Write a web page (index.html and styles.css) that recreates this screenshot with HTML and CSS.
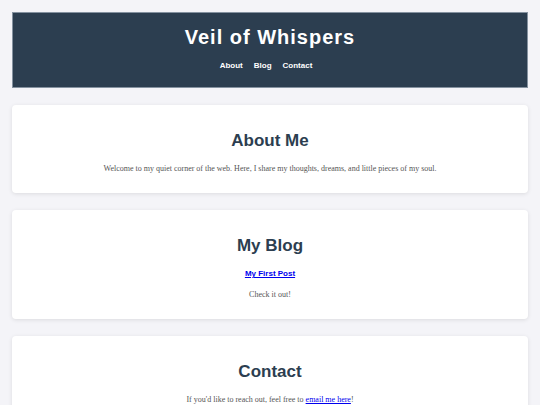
FILE: index.html
```html
<!DOCTYPE html>
<html lang="en">
<head>
    <meta charset="UTF-8">
    <meta name="viewport" content="width=device-width, initial-scale=1.0">
    <title>Veil of Whispers</title>
    <link rel="stylesheet" href="styles.css">
</head>
<body>
    <!-- Site header -->
    <header class="site-header">
        <h1>Veil of Whispers</h1>
        <nav class="nav">
            <a href="#about">About</a>
            <a href="#blog">Blog</a>
            <a href="#contact">Contact</a>
        </nav>
    </header>

    <!-- About section -->
    <section class="card" id="about">
        <h2>About Me</h2>
        <p>Welcome to my quiet corner of the web. Here, I share my thoughts, dreams, and little pieces of my soul.</p>
    </section>

    <!-- Blog section -->
    <section class="card" id="blog">
        <h2>My Blog</h2>
        <a class="post-link" href="#">My First Post</a>
        <p>Check it out!</p>
    </section>

    <!-- Contact section -->
    <section class="card" id="contact">
        <h2>Contact</h2>
        <p>If you'd like to reach out, feel free to <a href="#">email me here</a>!</p>
    </section>
</body>
</html>
```

FILE: styles.css
```css
body {
    margin: 0;
    padding: 12px;
    background-color: #f4f4f8;
    font-family: "Liberation Serif", serif;
    display: flex;
    flex-direction: column;
    gap: 17px;
}
.site-header {
    background-color: #2c3e50;
    border: 1px solid #8592a0;
    color: white;
    text-align: center;
    padding: 11px 0 15px;
}
.site-header h1 {
    margin: 0;
    font-family: "Liberation Sans", sans-serif;
    font-size: 20px;
    line-height: 26px;
    letter-spacing: 1px;
}
.nav {
    margin-top: 10px;
    padding-right: 8px;
    display: flex;
    justify-content: center;
    gap: 11px;
}
.nav a {
    color: white;
    text-decoration: none;
    font-family: "Liberation Sans", sans-serif;
    font-weight: bold;
    font-size: 8px;
    line-height: 12px;
}
.card {
    background-color: white;
    border-radius: 4px;
    box-shadow: 0 1px 4px rgba(0, 0, 0, 0.1);
    text-align: center;
    padding: 23px 20px 18px;
    display: flex;
    flex-direction: column;
    align-items: center;
}
.card h2 {
    margin: 0;
    color: #2c3e50;
    font-family: "Liberation Sans", sans-serif;
    font-size: 17px;
    line-height: 26px;
}
.card p {
    margin: 9px 0 0;
    color: #555;
    font-size: 8px;
    line-height: 12px;
}
.post-link {
    margin-top: 9px;
    color: #0000ee;
    font-family: "Liberation Sans", sans-serif;
    font-weight: bold;
    font-size: 8px;
    line-height: 12px;
}
.card p a {
    color: #0000ee;
}
```
